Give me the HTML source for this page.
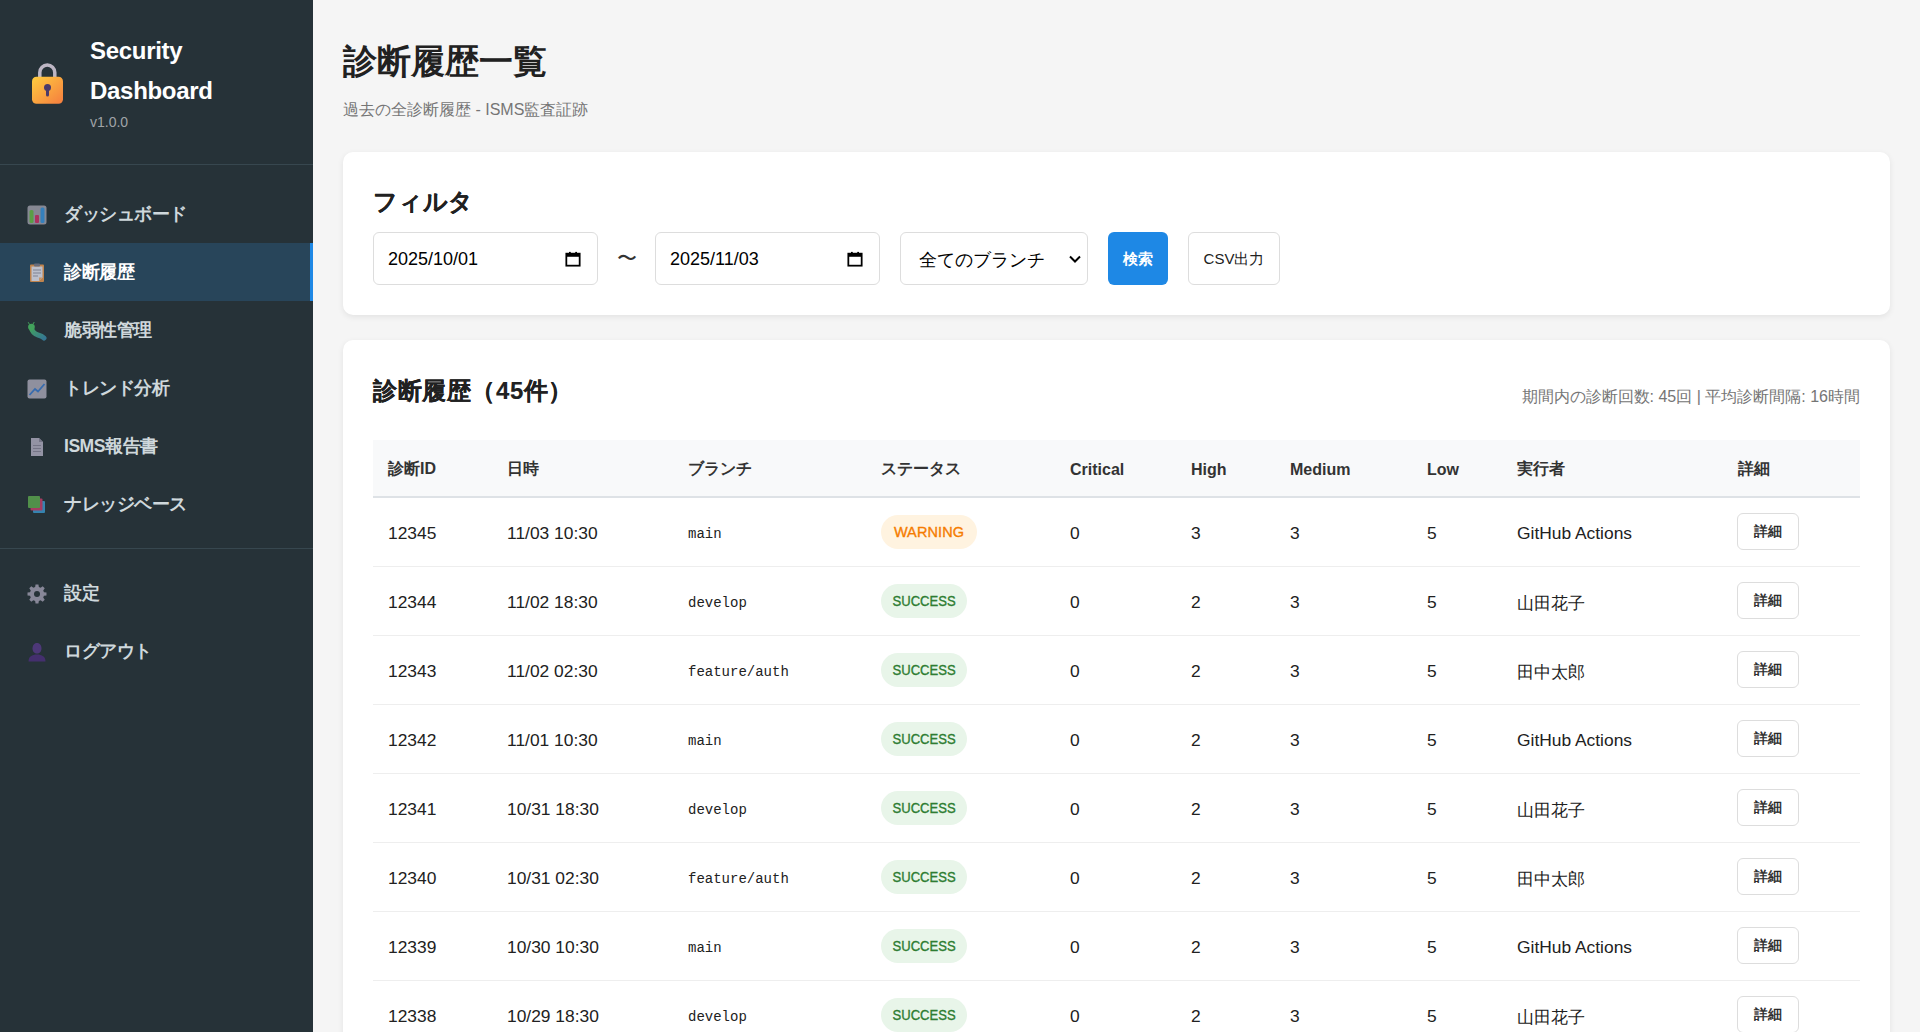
<!DOCTYPE html>
<html lang="ja">
<head>
<meta charset="utf-8">
<title>診断履歴一覧 - Security Dashboard</title>
<style>
*{box-sizing:border-box;margin:0;padding:0}
html,body{width:1920px;height:1032px;overflow:hidden}
body{font-family:"Liberation Sans",sans-serif;background:#f5f5f5;color:#212121;position:relative}
.sidebar{position:absolute;left:0;top:0;width:313px;height:1032px;background:#263238;color:#fff}
.logo{position:absolute;left:0;top:0;width:313px;height:165px;border-bottom:1px solid #37474f}
.lock{position:absolute;left:31px;top:63px;width:34px;height:42px}
.brand{position:absolute;left:90px;top:31px;font-size:24px;line-height:40px;font-weight:bold;color:#fff;letter-spacing:-0.3px}
.ver{position:absolute;left:90px;top:113px;font-size:14px;line-height:18px;color:#a0a4a8}
.nav{position:absolute;left:0;width:313px;height:58px}
.nav .ic{position:absolute;left:27px;top:20px;width:20px;height:20px;opacity:.75}
.nav .tx{position:absolute;left:64px;top:0;line-height:58px;font-size:17.6px;font-weight:bold;color:#cfd8dc;letter-spacing:-0.5px}
.nav.active{background:#28455a;border-right:3px solid #1e88e5}
.nav.active .tx{color:#fff}
.sep{position:absolute;left:0;top:548px;width:313px;height:1px;background:#37474f}
.main{position:absolute;left:313px;top:0;right:0;bottom:0}
h1{position:absolute;left:30px;top:39px;font-size:34px;line-height:44px;font-weight:bold;color:#212121}
.sub{position:absolute;left:30px;top:99px;font-size:16px;line-height:22px;color:#757575}
.card{position:absolute;left:30px;width:1547px;background:#fff;border-radius:10px;box-shadow:0 2px 6px rgba(0,0,0,.08)}
.c1{top:152px;height:163px}
.c2{top:340px;height:760px}
.c1 h2{position:absolute;left:30px;top:186px}
h2{font-size:24px;line-height:30px;font-weight:bold;color:#212121;-webkit-text-stroke:0.15px #212121}
.inp{position:absolute;top:80px;height:53px;border:1px solid #ddd;border-radius:6px;background:#fff}
.inp .v{position:absolute;left:14px;top:0;line-height:53px;font-size:18px;color:#000}
.cal{position:absolute;right:16px;top:18px;width:16px;height:16px}
.tilde{position:absolute;left:274px;top:80px;line-height:53px;font-size:20px;color:#333}
.btn{position:absolute;top:80px;height:53px;border-radius:6px;font-size:15px;line-height:53px;text-align:center}
.search{left:765px;width:60px;background:#1e88e5;color:#fff;font-weight:bold}
.csv{left:845px;width:92px;border:1px solid #ddd;color:#212121;line-height:51px}
.stats{position:absolute;right:30px;top:47px;font-size:16px;line-height:20px;color:#757575}
table{position:absolute;left:30px;top:100px;width:1487px;border-collapse:collapse;table-layout:fixed}
th{background:#f8f9fa;height:57px;text-align:left;padding:3px 0 0 15px;font-size:16px;font-weight:bold;color:#333;border-bottom:2px solid #dee2e6}
td{height:69px;padding:4px 0 0 15px;font-size:17.4px;color:#212121;border-bottom:1px solid #eee}
td.br{font-family:"Liberation Mono",monospace;font-size:14px}
.badge{display:inline-block;position:relative;top:-2px;height:34px;line-height:34px;text-align:center;border-radius:17px;font-size:14.5px;font-weight:normal;-webkit-text-stroke:0.35px currentColor}
.warn{background:#fff3e0;color:#f57c00;width:96px;letter-spacing:0.1px}
.ok{background:#e8f5e9;color:#2e7d32;width:86px}
.ok i{font-style:normal;display:inline-block;transform:scaleX(.9)}
.det{display:inline-block;position:relative;top:-2px;left:-1px;width:62px;height:37px;line-height:35px;text-align:center;border:1px solid #ddd;border-radius:6px;font-size:14px;font-weight:normal;-webkit-text-stroke:0.4px #212121;color:#212121;background:#fff}
</style>
</head>
<body>
<div class="sidebar">
  <div class="logo">
    <svg class="lock" viewBox="0 0 34 42">
      <defs><linearGradient id="lg" x1="0" y1="0" x2="1" y2="1"><stop offset="0" stop-color="#ffcd3f"/><stop offset="1" stop-color="#f57d3f"/></linearGradient></defs>
      <path d="M8.8 17 V9.5 A7.5 7.5 0 0 1 23.8 9.5 V17" fill="none" stroke="#bdb6c4" stroke-width="3.5"/>
      <rect x="1" y="13.7" width="31" height="27" rx="4.5" fill="url(#lg)"/>
      <circle cx="16.5" cy="24.5" r="3.5" fill="#4a3a6a"/><rect x="15" y="24.5" width="3" height="9" rx="1.5" fill="#4a3a6a"/>
    </svg>
    <div class="brand">Security<br>Dashboard</div>
    <div class="ver">v1.0.0</div>
  </div>
  <div class="nav" style="top:185px"><svg class="ic" viewBox="0 0 20 20"><rect x="0.5" y="0.5" width="19" height="19" rx="2.5" fill="#a6a5b2"/><rect x="2.5" y="5" width="4" height="13" rx="1.5" fill="#6cc24a"/><rect x="8" y="10" width="4" height="8" rx="1" fill="#d8326e"/><rect x="13.5" y="2.5" width="4" height="15.5" rx="1.5" fill="#3b9be8"/></svg><span class="tx">ダッシュボード</span></div>
  <div class="nav active" style="top:243px"><svg class="ic" viewBox="0 0 20 20"><rect x="3" y="1.5" width="14" height="17.5" rx="1" fill="#f39a4a"/><path d="M4.5 3.5 H15.5 V14.5 L12 18 H4.5 Z" fill="#eeeaf4"/><path d="M15.5 14.5 L12 18 V14.5 Z" fill="#f7b070"/><rect x="7" y="0.5" width="6" height="3" rx="1" fill="#7e7a88"/><rect x="6" y="6.5" width="8" height="1" fill="#9a96a6"/><rect x="6" y="9.5" width="8" height="1" fill="#9a96a6"/><rect x="6" y="12.5" width="5" height="1" fill="#9a96a6"/></svg><span class="tx">診断履歴</span></div>
  <div class="nav" style="top:301px"><svg class="ic" viewBox="0 0 20 20"><defs><linearGradient id="bug" x1="0" y1="0" x2="1" y2="1"><stop offset="0" stop-color="#4cc868"/><stop offset="1" stop-color="#3a8fb0"/></linearGradient></defs><path d="M4 6 Q5.5 12.5 11 14 Q15 15 17 17" fill="none" stroke="url(#bug)" stroke-width="5" stroke-linecap="round"/><circle cx="4.5" cy="6" r="3.3" fill="#4cc868"/><path d="M2.5 3.5 L1.2 1.2 M6 3 L7.3 1" stroke="#4cc868" stroke-width="1"/></svg><span class="tx">脆弱性管理</span></div>
  <div class="nav" style="top:359px"><svg class="ic" viewBox="0 0 20 20"><rect x="0.5" y="0.5" width="19" height="19" rx="2" fill="#b2b0c0"/><path d="M2.5 16 L8 10 L11 12.5 L17.5 5" fill="none" stroke="#3d7fd6" stroke-width="1.8"/></svg><span class="tx">トレンド分析</span></div>
  <div class="nav" style="top:417px"><svg class="ic" viewBox="0 0 20 20"><path d="M4 1 H12 L16 5 V19 H4 Z" fill="#b8b4c8"/><path d="M12 1 V5 H16" fill="#8e8aa0"/><rect x="6" y="8" width="8" height="1" fill="#8e8aa0"/><rect x="6" y="11" width="8" height="1" fill="#8e8aa0"/><rect x="6" y="14" width="8" height="1" fill="#8e8aa0"/></svg><span class="tx">ISMS報告書</span></div>
  <div class="nav" style="top:475px"><svg class="ic" viewBox="0 0 20 20"><rect x="6" y="6" width="12" height="12" rx="1" fill="#3aa0d8"/><rect x="3.5" y="3.5" width="12" height="12" rx="1" fill="#d04070"/><rect x="1" y="1" width="12" height="12" rx="1" fill="#60b050"/></svg><span class="tx">ナレッジベース</span></div>
  <div class="sep"></div>
  <div class="nav" style="top:564px"><svg class="ic" viewBox="0 0 20 20"><path d="M16.96 8.15 L19.49 8.55 L19.49 11.45 L16.96 11.85 L16.23 13.62 L17.73 15.69 L15.69 17.73 L13.62 16.23 L11.85 16.96 L11.45 19.49 L8.55 19.49 L8.15 16.96 L6.38 16.23 L4.31 17.73 L2.27 15.69 L3.77 13.62 L3.04 11.85 L0.51 11.45 L0.51 8.55 L3.04 8.15 L3.77 6.38 L2.27 4.31 L4.31 2.27 L6.38 3.77 L8.15 3.04 L8.55 0.51 L11.45 0.51 L11.85 3.04 L13.62 3.77 L15.69 2.27 L17.73 4.31 L16.23 6.38 Z" fill="#a8a4b8"/><circle cx="10" cy="10" r="3" fill="#263238"/></svg><span class="tx">設定</span></div>
  <div class="nav" style="top:622px"><svg class="ic" viewBox="0 0 20 20"><path d="M10 1 C13 1 14.5 3.5 14.5 6.5 C14.5 9.5 12.5 11.5 10 11.5 C7.5 11.5 5.5 9.5 5.5 6.5 C5.5 3.5 7 1 10 1 Z" fill="#5b3a8e"/><path d="M1.5 19.5 C1.5 14.5 5 12.5 10 12.5 C15 12.5 18.5 14.5 18.5 19.5 Z" fill="#4e2f80"/></svg><span class="tx">ログアウト</span></div>
</div>

<div class="main">
  <h1>診断履歴一覧</h1>
  <div class="sub">過去の全診断履歴 - ISMS監査証跡</div>

  <div class="card c1">
    <h2 style="position:absolute;left:30px;top:35px">フィルタ</h2>
    <div class="inp" style="left:30px;width:225px"><span class="v">2025/10/01</span>
      <svg class="cal" viewBox="0 0 18 18"><rect x="1.5" y="3" width="15" height="13.5" fill="none" stroke="#000" stroke-width="2"/><rect x="1.5" y="3" width="15" height="3.5" fill="#000"/><rect x="4.5" y="1" width="2" height="3" fill="#000"/><rect x="11.5" y="1" width="2" height="3" fill="#000"/></svg></div>
    <div class="tilde">〜</div>
    <div class="inp" style="left:312px;width:225px"><span class="v">2025/11/03</span>
      <svg class="cal" viewBox="0 0 18 18"><rect x="1.5" y="3" width="15" height="13.5" fill="none" stroke="#000" stroke-width="2"/><rect x="1.5" y="3" width="15" height="3.5" fill="#000"/><rect x="4.5" y="1" width="2" height="3" fill="#000"/><rect x="11.5" y="1" width="2" height="3" fill="#000"/></svg></div>
    <div class="inp" style="left:557px;width:188px"><span class="v" style="left:18px;font-size:17.5px;top:1px">全てのブランチ</span>
      <svg style="position:absolute;right:6px;top:22px;width:12px;height:9px" viewBox="0 0 12 9"><path d="M1 1.5 L6 6.5 L11 1.5" fill="none" stroke="#000" stroke-width="2"/></svg></div>
    <div class="btn search">検索</div>
    <div class="btn csv">CSV出力</div>
  </div>

  <div class="card c2">
    <h2 style="position:absolute;left:30px;top:36px;letter-spacing:0.6px">診断履歴（45件）</h2>
    <div class="stats">期間内の診断回数: 45回 | 平均診断間隔: 16時間</div>
    <table>
      <colgroup><col style="width:119px"><col style="width:181px"><col style="width:193px"><col style="width:189px"><col style="width:121px"><col style="width:99px"><col style="width:137px"><col style="width:90px"><col style="width:221px"><col style="width:137px"></colgroup>
      <thead><tr><th>診断ID</th><th>日時</th><th>ブランチ</th><th>ステータス</th><th>Critical</th><th>High</th><th>Medium</th><th>Low</th><th>実行者</th><th>詳細</th></tr></thead>
      <tbody>
        <tr><td>12345</td><td>11/03 10:30</td><td class="br">main</td><td><span class="badge warn">WARNING</span></td><td>0</td><td>3</td><td>3</td><td>5</td><td>GitHub Actions</td><td><span class="det">詳細</span></td></tr>
        <tr><td>12344</td><td>11/02 18:30</td><td class="br">develop</td><td><span class="badge ok"><i>SUCCESS</i></span></td><td>0</td><td>2</td><td>3</td><td>5</td><td>山田花子</td><td><span class="det">詳細</span></td></tr>
        <tr><td>12343</td><td>11/02 02:30</td><td class="br">feature/auth</td><td><span class="badge ok"><i>SUCCESS</i></span></td><td>0</td><td>2</td><td>3</td><td>5</td><td>田中太郎</td><td><span class="det">詳細</span></td></tr>
        <tr><td>12342</td><td>11/01 10:30</td><td class="br">main</td><td><span class="badge ok"><i>SUCCESS</i></span></td><td>0</td><td>2</td><td>3</td><td>5</td><td>GitHub Actions</td><td><span class="det">詳細</span></td></tr>
        <tr><td>12341</td><td>10/31 18:30</td><td class="br">develop</td><td><span class="badge ok"><i>SUCCESS</i></span></td><td>0</td><td>2</td><td>3</td><td>5</td><td>山田花子</td><td><span class="det">詳細</span></td></tr>
        <tr><td>12340</td><td>10/31 02:30</td><td class="br">feature/auth</td><td><span class="badge ok"><i>SUCCESS</i></span></td><td>0</td><td>2</td><td>3</td><td>5</td><td>田中太郎</td><td><span class="det">詳細</span></td></tr>
        <tr><td>12339</td><td>10/30 10:30</td><td class="br">main</td><td><span class="badge ok"><i>SUCCESS</i></span></td><td>0</td><td>2</td><td>3</td><td>5</td><td>GitHub Actions</td><td><span class="det">詳細</span></td></tr>
        <tr><td>12338</td><td>10/29 18:30</td><td class="br">develop</td><td><span class="badge ok"><i>SUCCESS</i></span></td><td>0</td><td>2</td><td>3</td><td>5</td><td>山田花子</td><td><span class="det">詳細</span></td></tr>
      </tbody>
    </table>
  </div>
</div>
</body>
</html>
